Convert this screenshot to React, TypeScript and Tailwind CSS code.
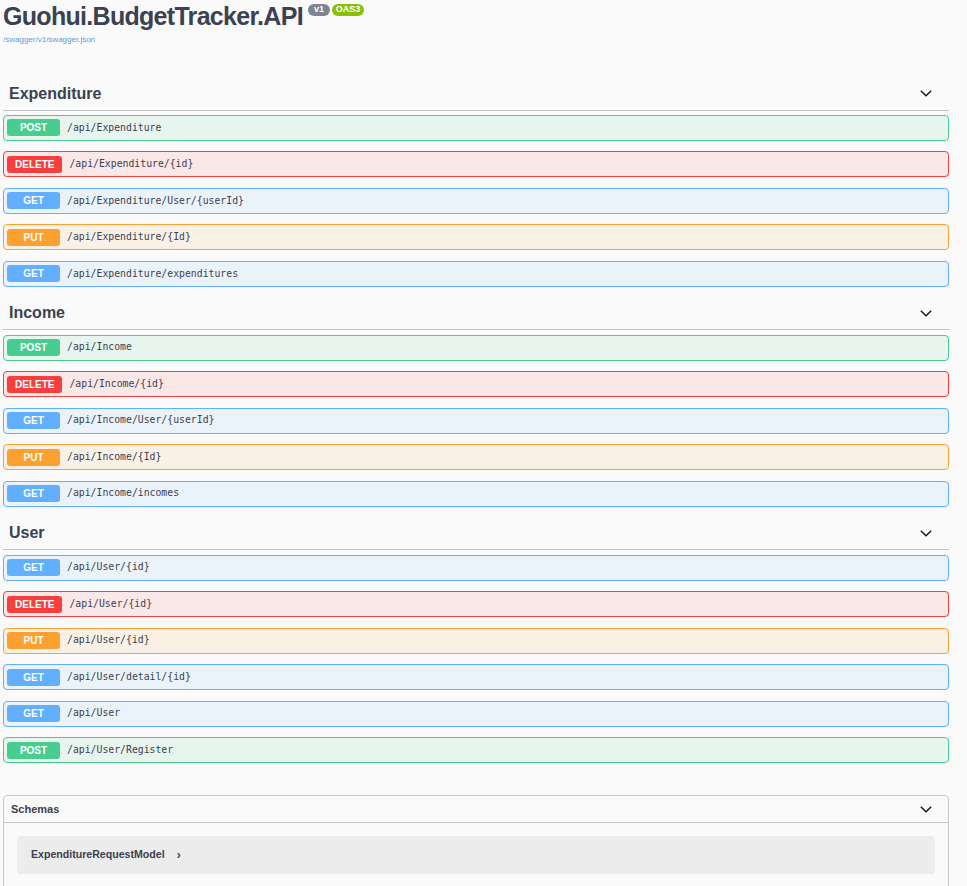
import React from "react";

type Method = "GET" | "POST" | "PUT" | "DELETE";

const styles: Record<Method, { row: string; badge: string }> = {
  POST: { row: "border-[#49cc90] bg-[#e8f5ef]", badge: "bg-[#49cc90]" },
  DELETE: { row: "border-[#f93e3e] bg-[#fae7e7]", badge: "bg-[#f93e3e]" },
  GET: { row: "border-[#61affe] bg-[#ebf3fa]", badge: "bg-[#61affe]" },
  PUT: { row: "border-[#fca130] bg-[#faf1e6]", badge: "bg-[#fca130]" },
};

const sections: { name: string; ops: [Method, string][] }[] = [
  {
    name: "Expenditure",
    ops: [
      ["POST", "/api/Expenditure"],
      ["DELETE", "/api/Expenditure/{id}"],
      ["GET", "/api/Expenditure/User/{userId}"],
      ["PUT", "/api/Expenditure/{Id}"],
      ["GET", "/api/Expenditure/expenditures"],
    ],
  },
  {
    name: "Income",
    ops: [
      ["POST", "/api/Income"],
      ["DELETE", "/api/Income/{id}"],
      ["GET", "/api/Income/User/{userId}"],
      ["PUT", "/api/Income/{Id}"],
      ["GET", "/api/Income/incomes"],
    ],
  },
  {
    name: "User",
    ops: [
      ["GET", "/api/User/{id}"],
      ["DELETE", "/api/User/{id}"],
      ["PUT", "/api/User/{id}"],
      ["GET", "/api/User/detail/{id}"],
      ["GET", "/api/User"],
      ["POST", "/api/User/Register"],
    ],
  },
];

function Chevron() {
  return (
    <svg width="12" height="7" viewBox="0 0 12 7" fill="none">
      <polyline points="0.8,0.8 6,5.8 11.2,0.8" stroke="#111" strokeWidth="1.3" />
    </svg>
  );
}

function Row({ method, path }: { method: Method; path: string }) {
  const s = styles[method];
  return (
    <div className={`flex h-[26px] items-center rounded-[4px] border pl-[3px] mb-[10.5px] ${s.row}`}>
      <span
        className={`flex h-[17px] min-w-[53px] items-center justify-center rounded-[3px] px-[8px] text-[10px] font-bold text-white ${s.badge}`}
      >
        {method}
      </span>
      <span className="ml-[7px] font-['DejaVu_Sans_Mono',monospace] text-[9.8px] text-[#3b4151]">{path}</span>
    </div>
  );
}

export default function App() {
  return (
    <div className="min-h-screen bg-[#fafafa] font-['Liberation_Sans',Arial,sans-serif] text-[#3b4151]">
      <div className="ml-[3px] w-[946px]">
        <div className="h-[77.7px]">
          <div className="flex items-start">
            <h1 className="pt-[2px] text-[25px] font-bold leading-[29px] tracking-[-0.7px] text-[#3b4151]">
              Guohui.BudgetTracker.API
            </h1>
            <span className="mt-[4px] ml-[5px] flex h-[12px] w-[22px] items-center justify-center rounded-full bg-[#7d8492] text-[9px] font-bold text-white">
              v1
            </span>
            <span className="mt-[4px] ml-[2px] flex h-[12px] w-[32px] items-center justify-center rounded-full bg-[#89bf04] text-[9px] font-bold text-white">
              OAS3
            </span>
          </div>
          <div className="mt-[4px] text-[8px] leading-[10px] text-[#5b9be6]">/swagger/v1/swagger.json</div>
        </div>

        {sections.map((sec) => (
          <div key={sec.name}>
            <div className="flex h-[33px] items-center justify-between border-b border-[#c1c3c7] pl-[6px] pr-[17px]">
              <span className="text-[16px] font-bold">{sec.name}</span>
              <Chevron />
            </div>
            <div className="pt-[4.3px]">
              {sec.ops.map(([m, p], i) => (
                <Row key={i} method={m} path={p} />
              ))}
            </div>
          </div>
        ))}

        <div className="mt-[32px] rounded-[4px] border border-[#c7c7c7] pb-[20px]">
          <div className="flex h-[27px] items-center justify-between border-b border-[#c7c7c7] pl-[7px] pr-[16px]">
            <span className="text-[11px] font-bold text-[#3b4151]">Schemas</span>
            <Chevron />
          </div>
          <div className="mx-[13px] mt-[13px] flex h-[38px] items-center rounded-[4px] bg-[#ececec] pl-[14px]">
            <span className="text-[10.6px] font-bold text-[#3b4151]">ExpenditureRequestModel</span>
            <span className="ml-[12px] text-[12px] font-bold text-[#3b4151]">›</span>
          </div>
        </div>
      </div>
    </div>
  );
}
